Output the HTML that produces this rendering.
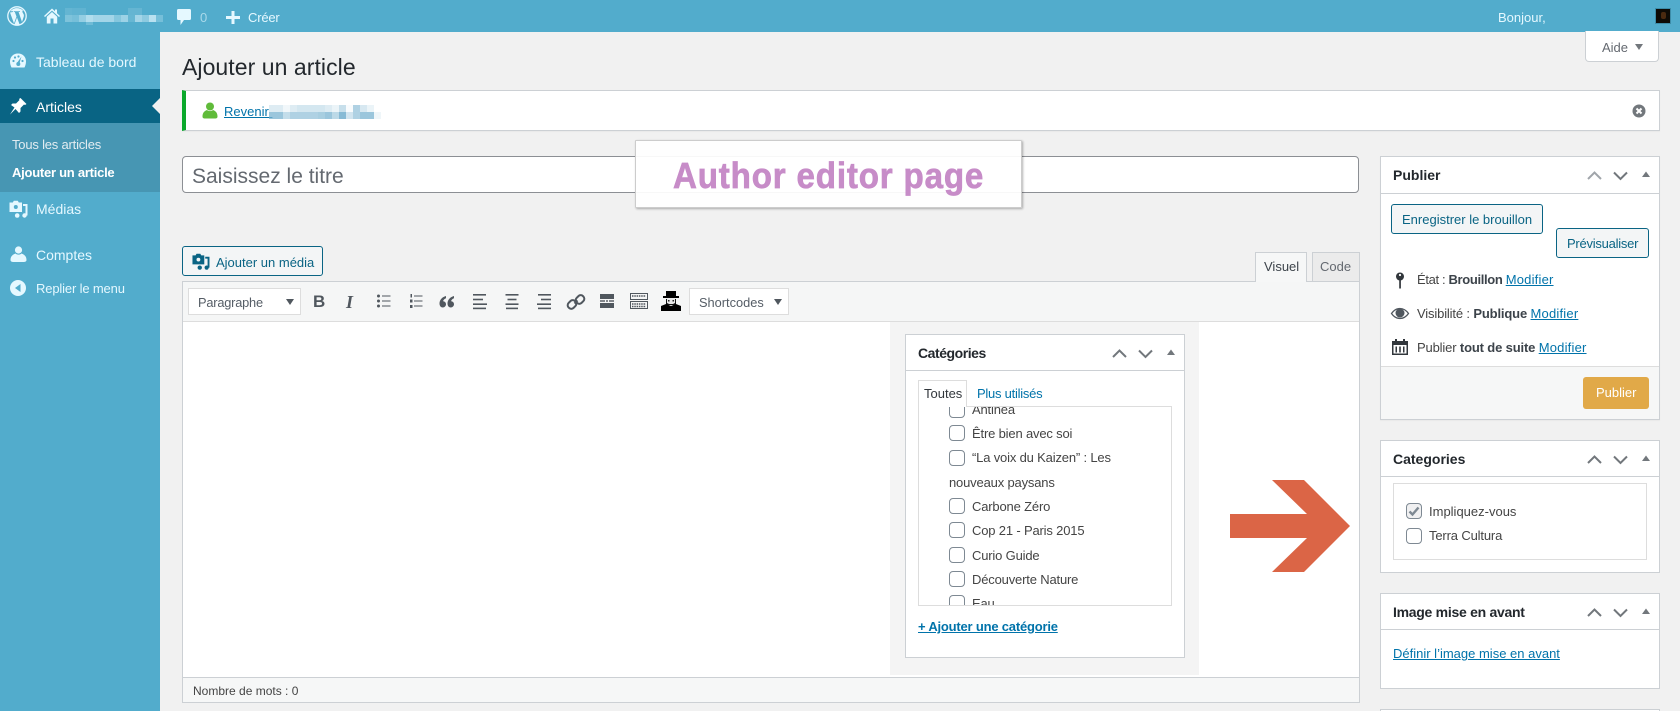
<!DOCTYPE html>
<html lang="fr"><head><meta charset="utf-8"><title>Ajouter un article</title>
<style>
*{box-sizing:border-box}
html,body{margin:0;padding:0;width:1680px;height:711px;overflow:hidden;background:#f1f1f1}
body{position:relative;font-family:"Liberation Sans",sans-serif;font-size:13px;color:#444}
.b{position:absolute}
.t{position:absolute;white-space:nowrap;line-height:20px;margin-top:-10px}
.box{position:absolute;background:#fff;border:1px solid #ccd0d4}
.line{position:absolute;height:1px;background:#ccd0d4}
a{color:#0073aa;text-decoration:underline}
.menu{color:#e5f8ff;font-size:14px}
.cb{position:absolute;width:16px;height:16px;border:1px solid #7e8993;border-radius:4px;background:#fff}
.btn{position:absolute;border:1px solid #0a6484;border-radius:3px;background:#f3f5f6;color:#0a6484}
svg{position:absolute;overflow:visible}
.ttl{font-weight:bold;font-size:14px;color:#23282d}
.h{color:#72777c}
b{color:#3c434a}
.list .t{letter-spacing:-.17px}
.mod{letter-spacing:.2px}
</style></head><body>

<!-- top bar -->
<div class="b" style="left:0;top:0;width:1680px;height:32px;background:#52accc"></div>
<div class="b" style="left:0;top:32px;width:160px;height:679px;background:#52accc"></div>

<svg style="left:7px;top:6px" width="20" height="20" viewBox="0 0 20 20"><circle cx="10" cy="10" r="9.2" fill="none" stroke="#e5f8ff" stroke-width="1.3"/><path d="M3 6.500 7 17.500 9.500 10.500 7.800 6H6.800V5.200H13V6H11.600L15 16 16.800 10.500C17.300 8.500 16 7.500 15.500 6.300 15.200 5.600 15.600 4.800 16 4.500 13 1.500 7 .8 3.400 5.200H6V6Z" fill="#e5f8ff"/><path d="M10 11.500 12.600 18.400C11 19 9 19 7.500 18.400Z" fill="#e5f8ff"/></svg>
<svg style="left:44px;top:8px" width="16" height="16" viewBox="0 0 16 16"><path d="M8 .5 0 8 1 9 8 2.600 15 9 16 8 13 5.200V1.500H11V3.300Z" fill="#e5f8ff"/><path d="M8 4 2.800 8.800V15.500H6.500V10.500H9.500V15.500H13.200V8.800Z" fill="#e5f8ff"/></svg>
<svg style="left:60px;top:4px" width="110" height="24" viewBox="0 0 110 24"><g fill="#e5f8ff">
<rect x="5" y="4" width="7" height="7" opacity=".12"/><rect x="12" y="4" width="14" height="7" opacity=".1"/><rect x="68" y="4" width="14" height="7" opacity=".13"/>
<rect x="5" y="11" width="7" height="7" opacity=".3"/><rect x="12" y="11" width="7" height="7" opacity=".25"/><rect x="19" y="11" width="7" height="7" opacity=".45"/><rect x="26" y="11" width="7" height="7" opacity=".65"/><rect x="33" y="11" width="21" height="7" opacity=".55"/><rect x="54" y="11" width="7" height="7" opacity=".35"/><rect x="61" y="11" width="7" height="7" opacity=".5"/><rect x="68" y="11" width="7" height="7" opacity=".15"/><rect x="75" y="11" width="7" height="7" opacity=".55"/><rect x="82" y="11" width="7" height="7" opacity=".4"/><rect x="89" y="11" width="7" height="7" opacity=".7"/><rect x="96" y="11" width="7" height="7" opacity=".25"/><rect x="26" y="18" width="7" height="3" opacity=".2"/></g></svg>
<svg style="left:177px;top:9px" width="14" height="16" viewBox="0 0 14 16"><path d="M1.500 0H12.500C13.500 0 14 .5 14 1.500V9.500C14 10.500 13.500 11 12.500 11H7L3.500 16V11H1.500C.5 11 0 10.500 0 9.500V1.500C0 .5.5 0 1.500 0Z" fill="#e5f8ff"/></svg>
<div class="t" style="left:200px;top:18px;color:#a9d9ea;font-size:13px">0</div>
<svg style="left:226px;top:10.500px" width="14" height="13" viewBox="0 0 14 13"><path d="M5.500 0H8.500V5H14V8H8.500V13H5.500V8H0V5H5.500Z" fill="#e5f8ff"/></svg>
<div class="t" style="left:248px;top:18px;color:#e5f8ff;font-size:13px;letter-spacing:-.2px">Créer</div>
<div class="t" style="left:1498px;top:18px;color:#e5f8ff;font-size:13px">Bonjour,</div>
<div class="b" style="left:1655px;top:8px;width:16px;height:16px;background:#0e0b06;border:1px solid #3d8ca8"></div>
<div class="b" style="left:1661px;top:12px;width:5px;height:7px;background:#4a2a10;border-radius:2px"></div>

<!-- side menu -->
<div class="b" style="left:0;top:89px;width:160px;height:34px;background:#096484"></div>
<div class="b" style="left:0;top:123px;width:160px;height:69px;background:#4796b3"></div>
<div class="b" style="left:152px;top:98px;width:0;height:0;border:8px solid transparent;border-left:0;border-right-color:#f1f1f1"></div>

<svg style="left:9px;top:53px" width="18" height="16" viewBox="0 0 18 16"><path d="M9 .5C4 .5 1 4 1 8.500 1 11 1.800 13 2.500 14.500H15.500C16.200 13 17 11 17 8.500 17 4 14 .5 9 .5Z" fill="#e5f8ff"/><g fill="#52accc"><circle cx="4.500" cy="8" r="1.100"/><circle cx="6" cy="4.500" r="1.100"/><circle cx="9.500" cy="3.500" r="1.100"/><circle cx="13.500" cy="8" r="1.100"/><path d="M12.500 3.500 10.500 10 8 10Z"/><circle cx="9.300" cy="11" r="2"/></g></svg>
<div class="t menu" style="left:36px;top:62px">Tableau de bord</div>

<svg style="left:9px;top:97px" width="18" height="18" viewBox="0 0 18 18"><path d="M11.500 1 17.500 7 16 8 15 7.500 11.500 11 11.500 14.500 10 16 6.500 12 1 17.500 5.500 10.500 2 8 3.500 6.500H7L10.500 3 10 2Z" fill="#fff"/></svg>
<div class="t menu" style="left:36px;top:107px;color:#fff">Articles</div>
<div class="t" style="left:12px;top:145px;color:#e2ecf1;letter-spacing:-.2px">Tous les articles</div>
<div class="t" style="left:12px;top:173px;color:#fff;font-weight:bold;letter-spacing:-.25px">Ajouter un article</div>

<svg style="left:9px;top:200px" width="18" height="18" viewBox="0 0 18 18"><path d="M.5 2.500H3.800L4.800 .8H8.800L9.800 2.500H13V12H.5Z" fill="#e5f8ff"/><circle cx="6.800" cy="7" r="2" fill="#52accc"/><path d="M14 5H17.500V15.500" fill="none" stroke="#e5f8ff" stroke-width="2"/><circle cx="15.500" cy="15.500" r="2.200" fill="#e5f8ff"/><circle cx="8.200" cy="15.500" r="2.300" fill="#e5f8ff"/></svg>
<div class="t menu" style="left:36px;top:209px">Médias</div>

<svg style="left:10px;top:246px" width="17" height="17" viewBox="0 0 17 17"><circle cx="8.500" cy="4" r="3.600" fill="#e5f8ff"/><path d="M5.500 7.500C3 8.500 .5 10 .5 14 .5 15.500 2 16 3.500 16H13.500C15 16 16.500 15.500 16.500 14 16.500 10 14 8.500 11.500 7.500 10 9 7 9 5.500 7.500Z" fill="#e5f8ff"/></svg>
<div class="t menu" style="left:36px;top:255px">Comptes</div>

<svg style="left:10px;top:280px" width="16" height="16" viewBox="0 0 16 16"><circle cx="8" cy="8" r="8" fill="#e5f8ff"/><path d="M10.500 4V12L5 8Z" fill="#52accc"/></svg>
<div class="t" style="left:36px;top:289px;color:#e5f8ff;letter-spacing:-.15px">Replier le menu</div>

<!-- heading -->
<div class="b" style="left:1585px;top:31px;width:74px;height:31px;background:#fff;border:1px solid #ccd0d4;border-top:0;border-radius:0 0 4px 4px"></div>
<div class="t" style="left:1602px;top:48px;color:#646970">Aide</div>
<div class="b" style="left:1635px;top:44px;width:0;height:0;border:4.500px solid transparent;border-bottom:0;border-top:6px solid #72777c"></div>
<div class="t" style="left:182px;top:67px;font-size:23px;line-height:30px;margin-top:-15px;color:#23282d;letter-spacing:.06px">Ajouter un article</div>

<!-- notice -->
<div class="box" style="left:182px;top:90px;width:1478px;height:41px;border-left:4px solid #0aa82b;box-shadow:0 1px 1px rgba(0,0,0,.04)"></div>
<svg style="left:202px;top:102px" width="16" height="17" viewBox="0 0 16 17"><circle cx="8" cy="4.500" r="4" fill="#60bb3a"/><path d="M5 8C2.500 9 .5 10.500 .5 14.500 .5 16 1.500 16.500 3 16.500H13C14.500 16.500 15.500 16 15.500 14.500 15.500 10.500 13.500 9 11 8 9.500 9.500 6.500 9.500 5 8Z" fill="#60bb3a"/></svg>
<a class="t" style="left:224px;top:112px;color:#0073aa;width:46px;display:block">Revenir&nbsp;</a>
<svg style="left:269px;top:105px" width="112" height="14" viewBox="0 0 112 14"><g fill="#7ab3d0"><rect x="0" y="0" width="14" height="7" opacity=".25"/><rect x="14" y="0" width="7" height="7" opacity=".1"/><rect x="21" y="0" width="7" height="7" opacity=".25"/><rect x="28" y="0" width="28" height="7" opacity=".32"/><rect x="56" y="0" width="7" height="7" opacity=".25"/><rect x="63" y="0" width="7" height="7" opacity=".15"/><rect x="70" y="0" width="7" height="7" opacity=".42"/><rect x="77" y="0" width="7" height="7" opacity=".05"/><rect x="84" y="0" width="7" height="7" opacity=".6"/><rect x="91" y="0" width="7" height="7" opacity=".3"/><rect x="98" y="0" width="7" height="7" opacity=".15"/>
<rect x="0" y="7" width="14" height="7" opacity=".75"/><rect x="14" y="7" width="7" height="7" opacity=".45"/><rect x="21" y="7" width="28" height="7" opacity=".6"/><rect x="49" y="7" width="7" height="7" opacity=".65"/><rect x="56" y="7" width="7" height="7" opacity=".75"/><rect x="63" y="7" width="7" height="7" opacity=".5"/><rect x="70" y="7" width="7" height="7" opacity=".9"/><rect x="77" y="7" width="7" height="7" opacity=".35"/><rect x="84" y="7" width="7" height="7" opacity=".6"/><rect x="91" y="7" width="14" height="7" opacity=".75"/><rect x="105" y="7" width="7" height="7" opacity=".12"/></g></svg>
<svg style="left:1632px;top:104px" width="14" height="14" viewBox="0 0 14 14"><circle cx="7" cy="7" r="6.500" fill="#72777c"/><path d="M4.500 4.500 9.500 9.500M9.500 4.500 4.500 9.500" stroke="#fff" stroke-width="2"/></svg>

<!-- title -->
<div class="b" style="left:182px;top:156px;width:1177px;height:37px;background:#fff;border:1px solid #8c8f94;border-radius:4px"></div>
<div class="t" style="left:192px;top:177px;font-size:21px;line-height:30px;margin-top:-15px;color:#646970">Saisissez le titre</div>

<!-- overlay -->
<div class="b" style="left:635px;top:140px;width:387px;height:68px;background:rgba(255,255,255,.93);border:1px solid #ccc;border-radius:1px;box-shadow:1px 1px 2px rgba(0,0,0,.3)"></div>
<div class="t" style="left:673px;top:176px;font-size:36px;line-height:40px;margin-top:-20px;font-weight:bold;color:#c78cc8;letter-spacing:.9px;transform:scaleX(.92);transform-origin:left center;-webkit-text-stroke:.7px #c78cc8">Author editor page</div>

<!-- add media -->
<div class="btn" style="left:182px;top:246px;width:141px;height:30px"></div>
<svg style="left:192px;top:253px" width="17" height="17" viewBox="0 0 18 18"><path d="M.5 2.500H3.800L4.800 .8H8.800L9.800 2.500H13V12H.5Z" fill="#0a6484"/><circle cx="6.800" cy="7" r="2" fill="#f3f5f6"/><path d="M14 5H17.500V15.500" fill="none" stroke="#0a6484" stroke-width="2"/><circle cx="15.500" cy="15.500" r="2.200" fill="#0a6484"/><circle cx="8.200" cy="15.500" r="2.300" fill="#0a6484"/></svg>
<div class="t" style="left:216px;top:263px;color:#0a6484;font-size:13px">Ajouter un média</div>

<!-- editor tabs -->
<div class="b" style="left:1255px;top:252px;width:52px;height:30px;background:#f6f7f7;border:1px solid #ccd0d4;border-bottom:0;z-index:2"></div>
<div class="t" style="left:1264px;top:267px;color:#3c434a;z-index:3">Visuel</div>
<div class="b" style="left:1312px;top:252px;width:48px;height:29px;background:#ebebeb;border:1px solid #ccd0d4;border-bottom:0"></div>
<div class="t" style="left:1320px;top:267px;color:#646970">Code</div>

<!-- editor -->
<div class="b" style="left:182px;top:281px;width:1178px;height:422px;background:#fff;border:1px solid #ccd0d4"></div>
<div class="b" style="left:183px;top:282px;width:1176px;height:40px;background:#f5f6f6;border-bottom:1px solid #ddd"></div>
<div class="b" style="left:188px;top:288px;width:113px;height:27px;background:#fff;border:1px solid #ddd"></div>
<div class="t" style="left:198px;top:303px;color:#555d66;font-size:12.800px;letter-spacing:-.2px">Paragraphe</div>
<div class="b" style="left:286px;top:299px;width:0;height:0;border:4.500px solid transparent;border-bottom:0;border-top:6px solid #50575e"></div>
<div class="t" style="left:313px;top:302px;font-weight:bold;font-size:17px;color:#50575e">B</div>
<div class="t" style="left:346px;top:302px;font:italic bold 18px/20px 'Liberation Serif',serif;color:#50575e">I</div>
<svg style="left:376px;top:293px" width="16" height="16" viewBox="0 0 16 16" fill="#50575e"><circle cx="2.500" cy="3" r="1.500"/><circle cx="2.500" cy="8" r="1.500"/><circle cx="2.500" cy="13" r="1.500"/><rect x="6" y="2.500" width="8.500" height="1"/><rect x="6" y="7.500" width="8.500" height="1"/><rect x="6" y="12.500" width="8.500" height="1"/></svg>
<svg style="left:408px;top:293px" width="16" height="16" viewBox="0 0 16 16" fill="#50575e"><rect x="2.500" y="1" width="1.500" height="3.500"/><rect x="2" y="6.500" width="2.500" height="3"/><rect x="2" y="12" width="2.500" height="3"/><rect x="6" y="2.500" width="8.500" height="1"/><rect x="6" y="7.500" width="8.500" height="1"/><rect x="6" y="12.500" width="8.500" height="1"/></svg>
<svg style="left:439px;top:295px" width="16" height="14" viewBox="0 0 16 14" fill="#50575e"><path d="M7 1C3 2 .5 5 .5 8.500 .5 11 2 12.500 3.800 12.500 5.500 12.500 7 11 7 9.300 7 7.500 5.700 6.300 4 6.300 4.300 5 5.500 3.800 7 3.200ZM15 1C11 2 8.500 5 8.500 8.500 8.500 11 10 12.500 11.800 12.500 13.500 12.500 15 11 15 9.300 15 7.500 13.700 6.300 12 6.300 12.300 5 13.500 3.800 15 3.200Z"/></svg>
<svg style="left:472px;top:293px" width="16" height="16" viewBox="0 0 16 16" fill="#50575e"><rect x="1" y="1" width="13" height="1.600"/><rect x="1" y="5.700" width="10" height="1.600"/><rect x="1" y="10.400" width="14" height="1.600"/><rect x="1" y="14.600" width="13" height="1.600"/></svg>
<svg style="left:504px;top:293px" width="16" height="16" viewBox="0 0 16 16" fill="#50575e"><rect x="1.500" y="1" width="13" height="1.600"/><rect x="3.500" y="5.700" width="9" height="1.600"/><rect x="1.500" y="10.400" width="13" height="1.600"/><rect x="2" y="14.600" width="12" height="1.600"/></svg>
<svg style="left:536px;top:293px" width="16" height="16" viewBox="0 0 16 16" fill="#50575e"><rect x="2" y="1" width="13" height="1.600"/><rect x="5" y="5.700" width="10" height="1.600"/><rect x="1" y="10.400" width="14" height="1.600"/><rect x="2" y="14.600" width="13" height="1.600"/></svg>
<svg style="left:567px;top:293px" width="18" height="18" viewBox="0 0 18 18" fill="none" stroke="#50575e" stroke-width="2"><path d="M7.500 10.500 10.500 7.500"/><rect x="9.500" y="2" width="7" height="9" rx="3.200" transform="rotate(45 13 6.500)"/><rect x="1.500" y="7" width="7" height="9" rx="3.200" transform="rotate(45 5 11.500)"/></svg>
<svg style="left:599px;top:293px" width="16" height="16" viewBox="0 0 16 16" fill="#50575e"><rect x="1" y="1" width="14" height="5"/><rect x="1" y="7.300" width="5" height="1.400"/><rect x="7" y="7.300" width="2" height="1.400"/><rect x="10" y="7.300" width="5" height="1.400"/><rect x="1" y="10" width="14" height="5"/></svg>
<svg style="left:630px;top:293px" width="18" height="16" viewBox="0 0 18 16"><path d="M.5 .5H17.500V6.500H.5ZM.5 8.500H17.500V15.500H.5Z" fill="#f5f6f6" stroke="#50575e"/><path d="M2 3H16M2 11H16M2 13.500H16" stroke="#50575e" stroke-width="1.500" stroke-dasharray="1.500 .8"/></svg>
<svg style="left:661px;top:291px" width="20" height="20" viewBox="0 0 20 20"><rect x="5" y="0" width="10" height="5" fill="#000"/><rect x="2" y="5" width="16" height="2" fill="#000"/><rect x="5" y="7" width="10" height="7" fill="#e8e8e8"/><rect x="7" y="9" width="1.500" height="1.500" fill="#222"/><rect x="11.500" y="9" width="1.500" height="1.500" fill="#222"/><path d="M5 8H6V12L8 13H12L14 12V8H15V14H5Z" fill="#111"/><path d="M0 20V15L5 13 10 15 15 13 20 15V20Z" fill="#000"/></svg>
<div class="b" style="left:689px;top:288px;width:100px;height:27px;background:#fff;border:1px solid #ddd"></div>
<div class="t" style="left:699px;top:303px;color:#555d66;font-size:12.800px">Shortcodes</div>
<div class="b" style="left:774px;top:299px;width:0;height:0;border:4.500px solid transparent;border-bottom:0;border-top:6px solid #50575e"></div>

<div class="b" style="left:183px;top:677px;width:1176px;height:25px;background:#f6f7f7;border-top:1px solid #ccd0d4"></div>
<div class="t" style="left:193px;top:691px;font-size:12px;color:#444">Nombre de mots : 0</div>

<!-- categories in editor -->
<div class="b" style="left:890px;top:322px;width:309px;height:353px;background:#f4f4f4"></div>
<div class="box" style="left:905px;top:334px;width:280px;height:324px"></div>
<div class="line" style="left:905px;top:370px;width:280px"></div>
<div class="t ttl" style="left:918px;top:353px;letter-spacing:-.45px">Catégories</div>
<svg style="left:1112px;top:347px" width="66" height="12" viewBox="0 0 66 12" fill="none" stroke="#72777c" stroke-width="2"><path d="M1 10 7.500 3.500 14 10M27 3.500 33.500 10 40 3.500" /><path d="M55 8 59 2.500 63 8Z" fill="#72777c" stroke="none"/></svg>
<div class="box list" style="left:918px;top:406px;width:254px;height:200px;border-color:#ddd;overflow:hidden">
  <div class="cb" style="left:30px;top:-5px"></div><div class="t" style="left:53px;top:3px;color:#444">Antinea</div>
  <div class="cb" style="left:30px;top:18px"></div><div class="t" style="left:53px;top:27px">Être bien avec soi</div>
  <div class="cb" style="left:30px;top:43px"></div><div class="t" style="left:53px;top:51px">“La voix du Kaizen” : Les</div>
  <div class="t" style="left:30px;top:76px">nouveaux paysans</div>
  <div class="cb" style="left:30px;top:91px"></div><div class="t" style="left:53px;top:100px">Carbone Zéro</div>
  <div class="cb" style="left:30px;top:115px"></div><div class="t" style="left:53px;top:124px">Cop 21 - Paris 2015</div>
  <div class="cb" style="left:30px;top:140px"></div><div class="t" style="left:53px;top:149px">Curio Guide</div>
  <div class="cb" style="left:30px;top:164px"></div><div class="t" style="left:53px;top:173px">Découverte Nature</div>
  <div class="cb" style="left:30px;top:188px"></div><div class="t" style="left:53px;top:197px">Eau</div>
</div>
<div class="b" style="left:918px;top:380px;width:49px;height:27px;background:#fff;border:1px solid #ddd;border-bottom:0"></div>
<div class="t" style="left:924px;top:394px;color:#32373c">Toutes</div>
<div class="t" style="left:977px;top:394px;color:#0073aa;letter-spacing:-.25px">Plus utilisés</div>
<a class="t" style="left:918px;top:627px;font-weight:bold;font-size:13px;letter-spacing:-.2px">+ Ajouter une catégorie</a>

<!-- arrow -->
<svg style="left:0;top:0" width="1680" height="711"><polygon points="1230,514 1307,514 1272,480 1304,480 1350,526 1304,572 1272,572 1307,538 1230,538" fill="#db6546"/></svg>

<!-- Publier -->
<div class="box" style="left:1380px;top:156px;width:280px;height:264px;box-shadow:0 1px 1px rgba(0,0,0,.04)"></div>
<div class="line" style="left:1380px;top:193px;width:280px"></div>
<div class="t ttl" style="left:1393px;top:175px">Publier</div>
<svg style="left:1587px;top:169px" width="66" height="12" viewBox="0 0 66 12" fill="none" stroke-width="2"><path d="M1 10 7.500 3.500 14 10" stroke="#a0a5aa"/><path d="M27 3.500 33.500 10 40 3.500" stroke="#72777c"/><path d="M55 8 59 2.500 63 8Z" fill="#72777c"/></svg>
<div class="btn" style="left:1391px;top:204px;width:152px;height:30px"></div>
<div class="t" style="left:1402px;top:220px;color:#0a6484">Enregistrer le brouillon</div>
<div class="btn" style="left:1556px;top:228px;width:93px;height:30px"></div>
<div class="t" style="left:1567px;top:244px;color:#0a6484;letter-spacing:-.25px">Prévisualiser</div>
<svg style="left:1395px;top:272px" width="10" height="17" viewBox="0 0 10 17"><circle cx="5" cy="4.500" r="4" fill="#32373c"/><circle cx="5" cy="3" r="1.100" fill="#fff"/><rect x="4.200" y="8" width="1.700" height="8.500" fill="#32373c"/></svg>
<div class="t" style="left:1417px;top:280px;color:#444;letter-spacing:-.35px">État : <b>Brouillon</b> <a class="mod">Modifier</a></div>
<svg style="left:1391px;top:307px" width="18" height="13" viewBox="0 0 18 13"><path d="M.5 6.500C3 3 6 1.500 9 1.500 12 1.500 15 3 17.500 6.500 15 10 12 11.500 9 11.500 6 11.500 3 10 .5 6.500Z" fill="none" stroke="#50575e" stroke-width="1.300"/><circle cx="9" cy="6" r="4.500" fill="#50575e"/></svg>
<div class="t" style="left:1417px;top:314px;color:#444;letter-spacing:-.15px">Visibilité : <b>Publique</b> <a class="mod">Modifier</a></div>
<svg style="left:1392px;top:338px" width="16" height="17" viewBox="0 0 16 17"><path d="M0 3H16V17H0ZM1.500 7V15.500H14.500V7Z" fill="#32373c"/><path d="M3 1H5V5H3ZM11 1H13V5H11ZM3.500 8.500H5V14.500H3.500ZM7.200 8.500H8.800V14.500H7.200ZM11 8.500H12.500V14.500H11Z" fill="#32373c"/></svg>
<div class="t" style="left:1417px;top:348px;color:#444;letter-spacing:-.15px">Publier <b>tout de suite</b> <a class="mod">Modifier</a></div>
<div class="b" style="left:1381px;top:366px;width:278px;height:53px;background:#f6f7f7;border-top:1px solid #ddd"></div>
<div class="b" style="left:1583px;top:377px;width:66px;height:32px;background:#e1a948;border-radius:3px"></div>
<div class="t" style="left:1596px;top:393px;color:#fff">Publier</div>

<!-- Categories -->
<div class="box" style="left:1380px;top:440px;width:280px;height:133px"></div>
<div class="line" style="left:1380px;top:476px;width:280px"></div>
<div class="t ttl" style="left:1393px;top:459px">Categories</div>
<svg style="left:1587px;top:453px" width="66" height="12" viewBox="0 0 66 12" fill="none" stroke="#72777c" stroke-width="2"><path d="M1 10 7.500 3.500 14 10M27 3.500 33.500 10 40 3.500"/><path d="M55 8 59 2.500 63 8Z" fill="#72777c" stroke="none"/></svg>
<div class="b" style="left:1393px;top:483px;width:254px;height:77px;border:1px solid #ddd"></div>
<div class="cb" style="left:1406px;top:503px;background:#f0f0f1"></div>
<svg style="left:1408px;top:506px" width="12" height="11" viewBox="0 0 12 11"><path d="M1.500 5.500 4.500 8.500 10.500 1.500" fill="none" stroke="#7e8993" stroke-width="2.400"/></svg>
<div class="t" style="left:1429px;top:512px">Impliquez-vous</div>
<div class="cb" style="left:1406px;top:528px"></div>
<div class="t" style="left:1429px;top:536px;letter-spacing:-.15px">Terra Cultura</div>

<!-- Image -->
<div class="box" style="left:1380px;top:593px;width:280px;height:96px"></div>
<div class="line" style="left:1380px;top:629px;width:280px"></div>
<div class="t ttl" style="left:1393px;top:612px;letter-spacing:-.28px">Image mise en avant</div>
<svg style="left:1587px;top:606px" width="66" height="12" viewBox="0 0 66 12" fill="none" stroke="#72777c" stroke-width="2"><path d="M1 10 7.500 3.500 14 10M27 3.500 33.500 10 40 3.500"/><path d="M55 8 59 2.500 63 8Z" fill="#72777c" stroke="none"/></svg>
<a class="t" style="left:1393px;top:654px">Définir l’image mise en avant</a>
<div class="box" style="left:1380px;top:709px;width:280px;height:10px"></div>

</body></html>
